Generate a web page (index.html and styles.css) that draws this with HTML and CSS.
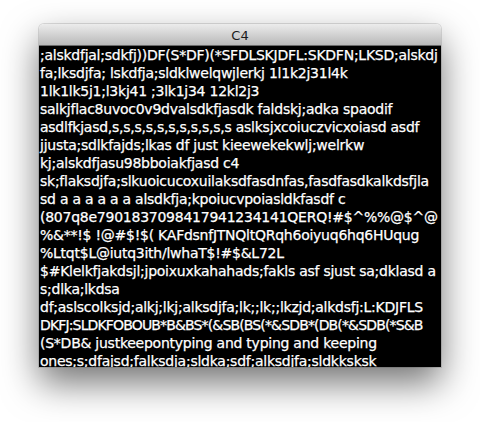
FILE: index.html
```html
<!DOCTYPE html>
<html>
<head>
<meta charset="utf-8">
<link rel="stylesheet" href="styles.css">
</head>
<body>
<div class="window">
  <div class="titlebar">C4</div>
  <div class="content">
    <div class="line">;alskdfjal;sdkfj))DF(S*DF)(*SFDLSKJDFL:SKDFN;LKSD;alskdj</div>
    <div class="line">fa;lksdjfa; lskdfja;sldklwelqwjlerkj 1l1k2j31l4k</div>
    <div class="line">1lk1lk5j1;l3kj41 ;3lk1j34 12kl2j3</div>
    <div class="line">salkjflac8uvoc0v9dvalsdkfjasdk faldskj;adka spaodif</div>
    <div class="line">asdlfkjasd,s,s,s,s,s,s,s,s,s,s,s aslksjxcoiuczvicxoiasd asdf</div>
    <div class="line">jjusta;sdlkfajds;lkas df just kieewekekwlj;welrkw</div>
    <div class="line">kj;alskdfjasu98bboiakfjasd c4</div>
    <div class="line">sk;flaksdjfa;slkuoicucoxuilaksdfasdnfas,fasdfasdkalkdsfjla</div>
    <div class="line">sd a a a a a a alsdkfja;kpoiucvpoiasldkfasdf c</div>
    <div class="line">(807q8e7901837098417941234141QERQ!#$^%%@$^@</div>
    <div class="line">%&amp;**!$ !@#$!$( KAFdsnfJTNQltQRqh6oiyuq6hq6HUqug</div>
    <div class="line">%Ltqt$L@iutq3ith/lwhaT$!#$&amp;L72L</div>
    <div class="line">$#Klelkfjakdsjl;jpoixuxkahahads;fakls asf sjust sa;dklasd a</div>
    <div class="line">s;dlka;lkdsa</div>
    <div class="line">df;aslscolksjd;alkj;lkj;alksdjfa;lk;;lk;;lkzjd;alkdsfj:L:KDJFLS</div>
    <div class="line caps">DKFJ:SLDKFOBOUB*B&amp;BS*(&amp;SB(BS(*&amp;SDB*(DB(*&amp;SDB(*S&amp;B</div>
    <div class="line">(S*DB&amp; justkeepontyping and typing and keeping</div>
    <div class="line">ones;s;dfajsd;falksdja;sldka;sdf;alksdjfa;sldkksksk</div>
  </div>
</div>
</body>
</html>
```
FILE: styles.css
```css
html, body {
  margin: 0;
  padding: 0;
  background: #ffffff;
}
body {
  width: 480px;
  height: 422px;
  overflow: hidden;
}
.window {
  margin: 24px 0 0 39px;
  width: 402px;
  border-radius: 5px 5px 0 0;
  box-shadow: 0 16px 36px rgba(0,0,0,0.55), 0 0 0 1px rgba(0,0,0,0.12);
  overflow: hidden;
}
.titlebar {
  height: 22px;
  line-height: 23px;
  text-align: center;
  font-family: "DejaVu Sans", sans-serif;
  font-size: 13px;
  color: #1a1a1a;
  background: linear-gradient(#ececec, #d0d0d0 55%, #b9b9b9);
  border-bottom: 1px solid #6a6a6a;
  box-sizing: border-box;
}
.content {
  background: #000;
  height: 321px;
  overflow: hidden;
  padding: 0 0 0 1px;
  font-family: "DejaVu Sans", sans-serif;
  font-size: 14px;
  color: #fff;
  line-height: 18px;
  -webkit-text-stroke: 0.25px #fff;
}
.line {
  white-space: nowrap;
  letter-spacing: -0.25px;
}
.line.caps {
  letter-spacing: -0.85px;
}
```
